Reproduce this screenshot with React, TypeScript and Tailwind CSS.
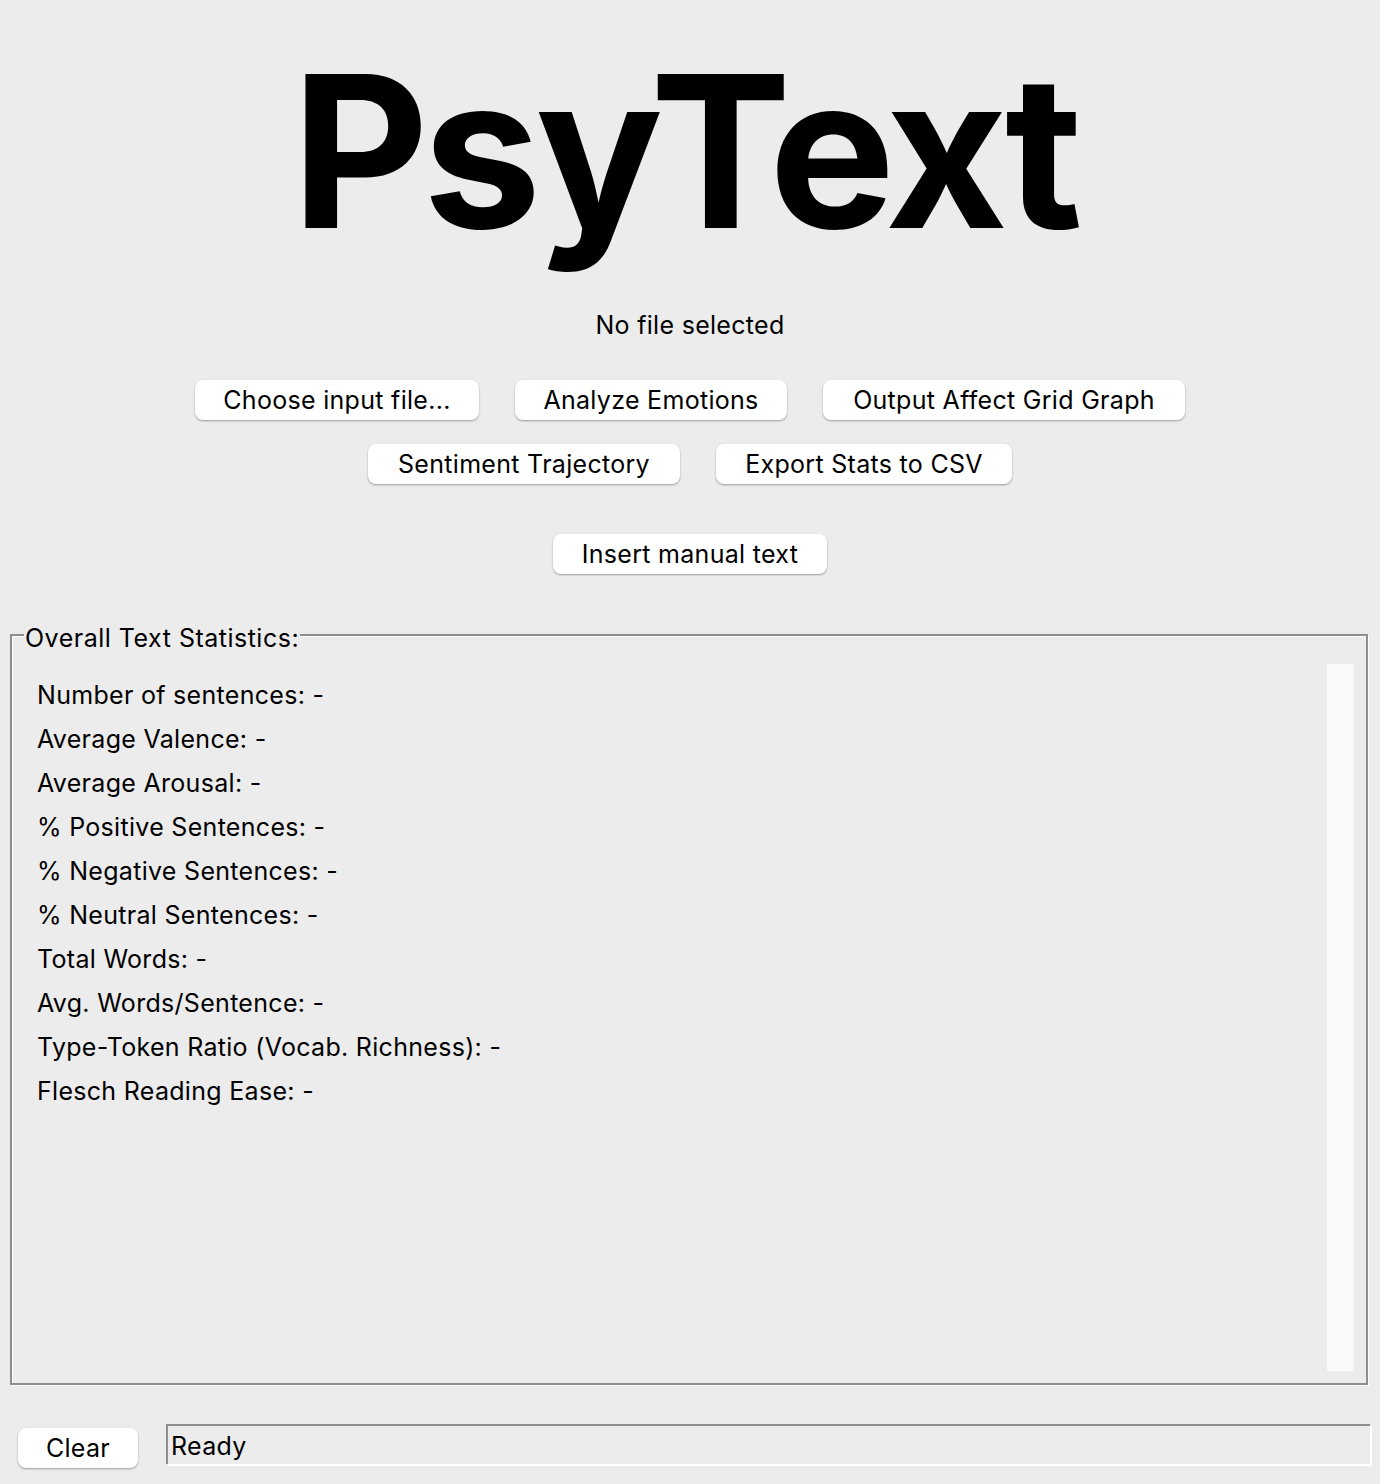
import React from "react";

const stats = [
  "Number of sentences: -",
  "Average Valence: -",
  "Average Arousal: -",
  "% Positive Sentences: -",
  "% Negative Sentences: -",
  "% Neutral Sentences: -",
  "Total Words: -",
  "Avg. Words/Sentence: -",
  "Type-Token Ratio (Vocab. Richness): -",
  "Flesch Reading Ease: -",
];

// mac-style push button
const Btn = ({ label, w }: { label: string; w: string }) => (
  <button
    className={`${w} h-[40px] rounded-[8px] bg-white text-[25px] leading-none tracking-[0.3px] text-black shadow-[0_1px_2px_rgba(0,0,0,0.35)]`}
  >
    {label}
  </button>
);

export default function App() {
  return (
    <div className="relative h-[1484px] w-[1380px] overflow-hidden bg-[#ececec] font-['Inter','Liberation_Sans',sans-serif] text-black">
      {/* title */}
      <div className="flex flex-col items-center">
        <h1 className="mt-[45px] pr-[12px] text-[212px] font-bold leading-none tracking-[-6px]">PsyText</h1>
        <p className="mt-[56px] text-[25px] leading-none tracking-[0.3px]">No file selected</p>
      </div>

      {/* action buttons */}
      <div className="mt-[42px] flex justify-center gap-[36px]">
        <Btn label="Choose input file..." w="w-[284px]" />
        <Btn label="Analyze Emotions" w="w-[272px]" />
        <Btn label="Output Affect Grid Graph" w="w-[362px]" />
      </div>
      <div className="mt-[24px] flex justify-center gap-[36px]">
        <Btn label="Sentiment Trajectory" w="w-[312px]" />
        <Btn label="Export Stats to CSV" w="w-[296px]" />
      </div>
      <div className="mt-[50px] flex justify-center">
        <Btn label="Insert manual text" w="w-[274px]" />
      </div>

      {/* stats frame */}
      <div className="relative mx-[10px] mt-[60px] h-[751px] w-[1358px] border-2 border-[#8e8e8e] shadow-[inset_1px_1px_0_#fff,1px_1px_0_#fff]">
        <span className="absolute left-[12px] top-[-14px] bg-[#ececec] px-[1px] text-[25px] leading-[32px] tracking-[0.5px]">
          Overall Text Statistics:
        </span>
        <div className="flex h-full pr-[12px] pt-[28px] pb-[12px]">
          <div className="flex-1 pl-[25px] pt-[9px]">
            {stats.map((s) => (
              <div key={s} className="h-[44px] text-[25px] leading-[44px] tracking-[0.3px]">
                {s}
              </div>
            ))}
          </div>
          <div className="w-[27px] border-r border-[#f4f4f4] bg-[#fafafa]" />
        </div>
      </div>

      {/* bottom bar */}
      <div className="mt-[39px] flex items-start pl-[18px] pr-[10px]">
        <div className="mt-[4px]">
          <Btn label="Clear" w="w-[120px]" />
        </div>
        <div className="ml-[28px] flex h-[40px] flex-1 items-center border-l-2 border-t-2 border-[#8e8e8e] pl-[3px] pt-[4px] text-[25px] tracking-[0.3px] shadow-[2px_2px_0_#fff]">
          Ready
        </div>
      </div>
    </div>
  );
}
